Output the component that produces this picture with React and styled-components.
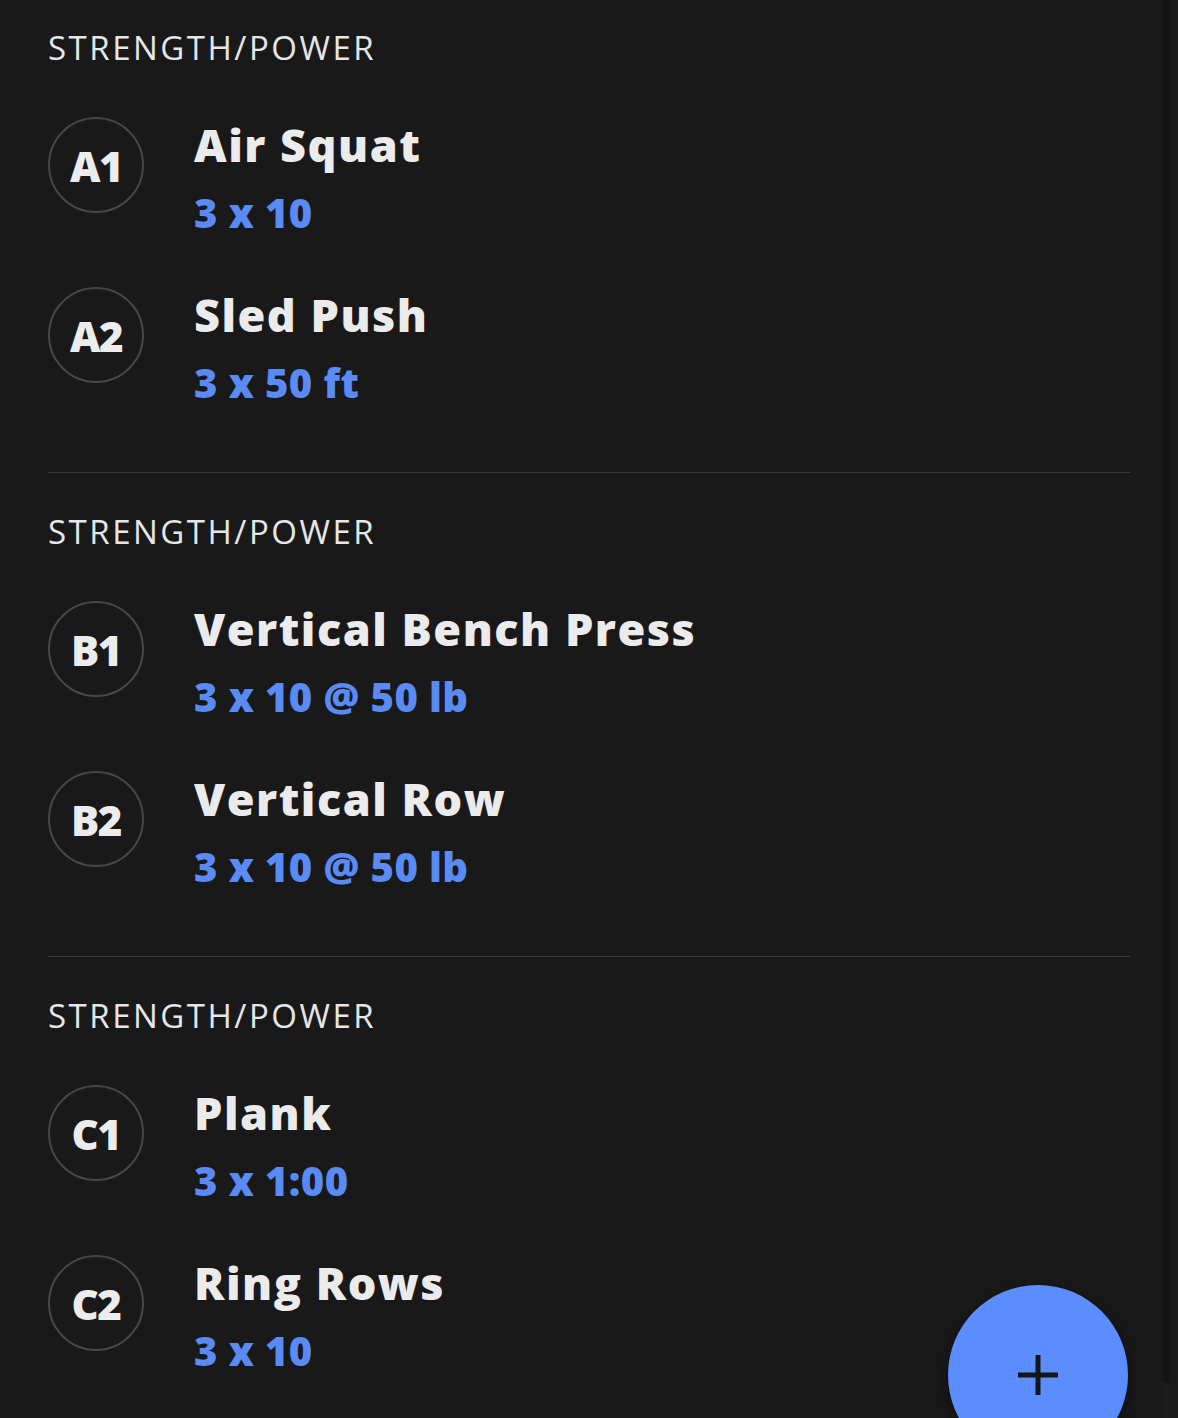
import React from "react";
import styled, { createGlobalStyle } from "styled-components";

const Global = createGlobalStyle`
  html, body {
    margin: 0;
    padding: 0;
    background: #19191a;
  }
  body {
    font-family: "Open Sans", "Noto Sans", sans-serif;
    -webkit-font-smoothing: antialiased;
  }
`;

const Page = styled.main`
  position: relative;
  min-height: 1418px;
  padding: 0 48px;
  background: #19191a;
  overflow: hidden;
`;

const Section = styled.section`
  padding: ${(p) => (p.$first ? "24px" : "35px")} 0 52px;
  border-bottom: ${(p) => (p.$last ? "none" : "1px solid #3a3a3b")};
`;

const Header = styled.h2`
  margin: 0 0 8px;
  height: 48px;
  line-height: 48px;
  font-size: 33px;
  font-weight: 400;
  letter-spacing: 2.5px;
  color: #e6e6e6;
`;

const Row = styled.div`
  display: flex;
  align-items: center;
  gap: 50px;
  height: 170px;
`;

const Badge = styled.div`
  flex: none;
  width: 92px;
  height: 92px;
  border-radius: 50%;
  border: 2px solid #474748;
  display: flex;
  align-items: center;
  justify-content: center;
  font-size: 42px;
  font-weight: 800;
  color: #ececec;
  letter-spacing: -1.5px;
`;

const Info = styled.div`
  display: flex;
  flex-direction: column;
  margin-top: 31px;
`;

const Title = styled.div`
  font-size: 45px;
  font-weight: 800;
  line-height: 64px;
  letter-spacing: 1.5px;
  color: #ebebeb;
`;

const Detail = styled.div`
  font-size: 40px;
  font-weight: 800;
  line-height: 72px;
  letter-spacing: 0.4px;
  color: #5a8bf4;
`;

const Fab = styled.button`
  position: fixed;
  right: 50px;
  bottom: -47px;
  width: 180px;
  height: 180px;
  border-radius: 50%;
  border: none;
  background: #5b8dfe;
  box-shadow: 0 4px 14px rgba(0, 0, 0, 0.45);
  display: flex;
  align-items: flex-start;
  justify-content: center;
  padding-top: 68px;
  cursor: pointer;
`;

const ScrollTrack = styled.div`
  position: fixed;
  top: 0;
  right: 0;
  width: 16px;
  height: 100%;
  background: #1b1b1c;
`;

const ScrollThumb = styled.div`
  position: absolute;
  top: 0;
  left: 1px;
  width: 7px;
  height: 1383px;
  border-radius: 0 0 4px 4px;
  background: #141415;
`;

const sections = [
  {
    name: "STRENGTH/POWER",
    items: [
      { id: "A1", title: "Air Squat", detail: "3 x 10" },
      { id: "A2", title: "Sled Push", detail: "3 x 50 ft" },
    ],
  },
  {
    name: "STRENGTH/POWER",
    items: [
      { id: "B1", title: "Vertical Bench Press", detail: "3 x 10 @ 50 lb" },
      { id: "B2", title: "Vertical Row", detail: "3 x 10 @ 50 lb" },
    ],
  },
  {
    name: "STRENGTH/POWER",
    items: [
      { id: "C1", title: "Plank", detail: "3 x 1:00" },
      { id: "C2", title: "Ring Rows", detail: "3 x 10" },
    ],
  },
];

export default function App() {
  return (
    <>
      <Global />
      <Page>
        {sections.map((s, i) => (
          <Section key={i} $first={i === 0} $last={i === sections.length - 1}>
            <Header>{s.name}</Header>
            {s.items.map((it) => (
              <Row key={it.id}>
                <Badge>{it.id}</Badge>
                <Info>
                  <Title>{it.title}</Title>
                  <Detail>{it.detail}</Detail>
                </Info>
              </Row>
            ))}
          </Section>
        ))}
        <ScrollTrack>
          <ScrollThumb />
        </ScrollTrack>
        <Fab aria-label="Add">
          <svg width="44" height="44" viewBox="0 0 44 44">
            <path d="M22 2v40M2 22h40" stroke="#151515" strokeWidth="5" />
          </svg>
        </Fab>
      </Page>
    </>
  );
}
